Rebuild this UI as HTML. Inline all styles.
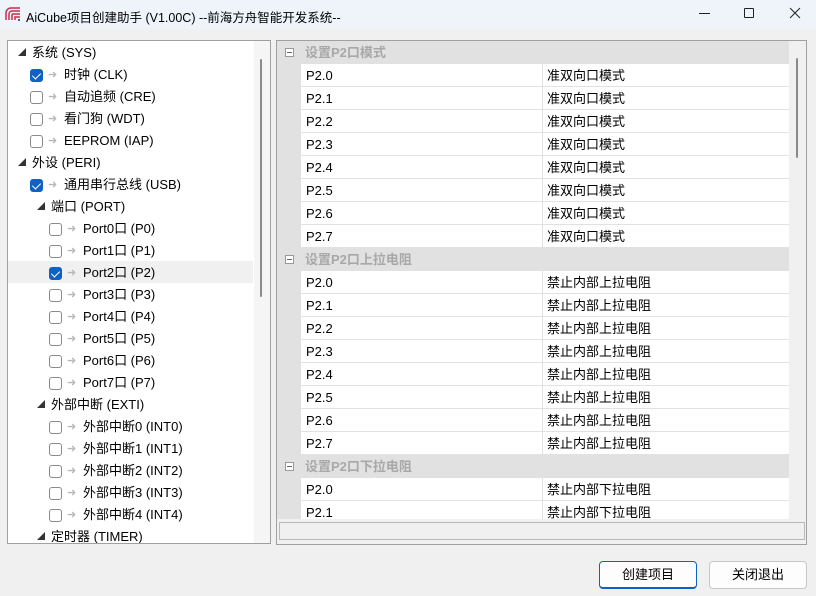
<!DOCTYPE html>
<html><head><meta charset="utf-8"><style>
*{margin:0;padding:0;box-sizing:border-box}
body{width:816px;height:596px;background:#f0f0f0;font-family:"Liberation Sans","Noto Sans CJK SC",sans-serif;font-size:13px;color:#000;position:relative;overflow:hidden}
.a{position:absolute}
.title{left:0;top:0;width:816px;height:29px;background:#eef4f9}
.tree{left:7px;top:40px;width:264px;height:504px;background:#fff;border:1px solid #a0a0a0;overflow:hidden}
.row{position:absolute;left:0;width:245px;height:22px;line-height:24px;white-space:nowrap}
.cb{position:absolute;top:6px;width:13px;height:13px;border:1px solid #8a8a8a;border-radius:3px;background:#fff}
.cb.on{background:#0f62c2;border-color:#0f62c2}
.cb.on:after{content:"";position:absolute;left:3px;top:1px;width:4px;height:7px;border:solid #fff;border-width:0 1.5px 1.5px 0;transform:rotate(45deg)}
.ar{position:absolute;top:0;color:#b8b8b8;font-size:11px}
.tri{position:absolute;top:0;font-size:8px;color:#333}
.grid{left:276px;top:40px;width:531px;height:505px;background:#f0f0f0;border:1px solid #a0a0a0;overflow:hidden}
.g{position:absolute;left:0;width:512px;height:23px;line-height:24px}
.cat{background:#e1e1e1;color:#a8a8a8;font-weight:bold}
.p{background:#e1e1e1}
.p .n{position:absolute;left:24px;width:241px;height:23px;background:#fff;border-bottom:1px solid #e1e1e1;padding-left:5px}
.p .v{position:absolute;left:265px;width:247px;height:23px;background:#fff;border-bottom:1px solid #e1e1e1;border-left:1px solid #e1e1e1;padding-left:4px}
.btn{height:28px;width:98px;border:1px solid #c8c8c8;border-radius:4px;background:#fdfdfd;text-align:center;line-height:26px;font-size:13px}
</style></head><body>
<div class="a title">
<svg class="a" style="left:5px;top:7px" width="16" height="14" viewBox="0 0 16 14"><path d="M1 13V6a5 5 0 0 1 5-5h9M4 13V7a3 3 0 0 1 3-3h8M7 13V8a1 1 0 0 1 1-1h7M10 13v-3h5" fill="none" stroke="#c0304a" stroke-width="1.5"/><path d="M13 13h2" stroke="#6048c0" stroke-width="2"/></svg>
<div class="a" style="left:26px;top:7px;font-size:12.5px">AiCube项目创建助手 (V1.00C) --前海方舟智能开发系统--</div>
<div class="a" style="left:699px;top:13px;width:11px;height:1px;background:#222"></div>
<div class="a" style="left:744px;top:8px;width:10px;height:10px;border:1px solid #222;border-radius:1px"></div>
<svg class="a" style="left:789px;top:7px" width="12" height="12"><path d="M1 1L11 11M11 1L1 11" stroke="#222" stroke-width="1"/></svg>
</div>

<div class="a tree">
<div class="a" style="left:246px;top:0;width:17px;height:502px;background:#f5f5f5"></div>
<div class="a" style="left:252px;top:18px;width:2px;height:238px;background:#8a8a8a;border-radius:1px"></div>
<div class="row" style="top:0"><span class="tri" style="left:10px">◢</span><span class="a" style="left:24px">系统 (SYS)</span></div>
<div class="row" style="top:22px"><span class="cb on" style="left:22px"></span><span class="ar" style="left:40px">➜</span><span class="a" style="left:56px">时钟 (CLK)</span></div>
<div class="row" style="top:44px"><span class="cb" style="left:22px"></span><span class="ar" style="left:40px">➜</span><span class="a" style="left:56px">自动追频 (CRE)</span></div>
<div class="row" style="top:66px"><span class="cb" style="left:22px"></span><span class="ar" style="left:40px">➜</span><span class="a" style="left:56px">看门狗 (WDT)</span></div>
<div class="row" style="top:88px"><span class="cb" style="left:22px"></span><span class="ar" style="left:40px">➜</span><span class="a" style="left:56px">EEPROM (IAP)</span></div>
<div class="row" style="top:110px"><span class="tri" style="left:10px">◢</span><span class="a" style="left:24px">外设 (PERI)</span></div>
<div class="row" style="top:132px"><span class="cb on" style="left:22px"></span><span class="ar" style="left:40px">➜</span><span class="a" style="left:56px">通用串行总线 (USB)</span></div>
<div class="row" style="top:154px"><span class="tri" style="left:29px">◢</span><span class="a" style="left:43px">端口 (PORT)</span></div>
<div class="row" style="top:176px"><span class="cb" style="left:41px"></span><span class="ar" style="left:59px">➜</span><span class="a" style="left:75px">Port0口 (P0)</span></div>
<div class="row" style="top:198px"><span class="cb" style="left:41px"></span><span class="ar" style="left:59px">➜</span><span class="a" style="left:75px">Port1口 (P1)</span></div>
<div class="row" style="top:220px;background:#f0f0f0"><span class="cb on" style="left:41px"></span><span class="ar" style="left:59px">➜</span><span class="a" style="left:75px">Port2口 (P2)</span></div>
<div class="row" style="top:242px"><span class="cb" style="left:41px"></span><span class="ar" style="left:59px">➜</span><span class="a" style="left:75px">Port3口 (P3)</span></div>
<div class="row" style="top:264px"><span class="cb" style="left:41px"></span><span class="ar" style="left:59px">➜</span><span class="a" style="left:75px">Port4口 (P4)</span></div>
<div class="row" style="top:286px"><span class="cb" style="left:41px"></span><span class="ar" style="left:59px">➜</span><span class="a" style="left:75px">Port5口 (P5)</span></div>
<div class="row" style="top:308px"><span class="cb" style="left:41px"></span><span class="ar" style="left:59px">➜</span><span class="a" style="left:75px">Port6口 (P6)</span></div>
<div class="row" style="top:330px"><span class="cb" style="left:41px"></span><span class="ar" style="left:59px">➜</span><span class="a" style="left:75px">Port7口 (P7)</span></div>
<div class="row" style="top:352px"><span class="tri" style="left:29px">◢</span><span class="a" style="left:43px">外部中断 (EXTI)</span></div>
<div class="row" style="top:374px"><span class="cb" style="left:41px"></span><span class="ar" style="left:59px">➜</span><span class="a" style="left:75px">外部中断0 (INT0)</span></div>
<div class="row" style="top:396px"><span class="cb" style="left:41px"></span><span class="ar" style="left:59px">➜</span><span class="a" style="left:75px">外部中断1 (INT1)</span></div>
<div class="row" style="top:418px"><span class="cb" style="left:41px"></span><span class="ar" style="left:59px">➜</span><span class="a" style="left:75px">外部中断2 (INT2)</span></div>
<div class="row" style="top:440px"><span class="cb" style="left:41px"></span><span class="ar" style="left:59px">➜</span><span class="a" style="left:75px">外部中断3 (INT3)</span></div>
<div class="row" style="top:462px"><span class="cb" style="left:41px"></span><span class="ar" style="left:59px">➜</span><span class="a" style="left:75px">外部中断4 (INT4)</span></div>
<div class="row" style="top:484px"><span class="tri" style="left:29px">◢</span><span class="a" style="left:43px">定时器 (TIMER)</span></div>
</div>

<div class="a grid">
<div class="a" style="left:512px;top:0;width:17px;height:478px;background:#f0f0f0"></div>
<div class="a" style="left:519px;top:17px;width:2px;height:100px;background:#8a8a8a;border-radius:1px"></div>
<div class="a" style="left:2px;top:481px;width:526px;height:18px;border:1px solid #b8b8b8;background:#f0f0f0"></div>
<div class="a" style="left:0;top:0;width:512px;height:478px;overflow:hidden">
<div class="g cat" style="top:0"><span class="a" style="left:8px;top:7px;width:9px;height:9px;border:1px solid #999;background:#fff"></span><span class="a" style="left:10px;top:11px;width:5px;height:1px;background:#666"></span><span class="a" style="left:28px">设置P2口模式</span></div>
<div class="g p" style="top:23px"><div class="n">P2.0</div><div class="v">准双向口模式</div></div>
<div class="g p" style="top:46px"><div class="n">P2.1</div><div class="v">准双向口模式</div></div>
<div class="g p" style="top:69px"><div class="n">P2.2</div><div class="v">准双向口模式</div></div>
<div class="g p" style="top:92px"><div class="n">P2.3</div><div class="v">准双向口模式</div></div>
<div class="g p" style="top:115px"><div class="n">P2.4</div><div class="v">准双向口模式</div></div>
<div class="g p" style="top:138px"><div class="n">P2.5</div><div class="v">准双向口模式</div></div>
<div class="g p" style="top:161px"><div class="n">P2.6</div><div class="v">准双向口模式</div></div>
<div class="g p" style="top:184px"><div class="n">P2.7</div><div class="v">准双向口模式</div></div>
<div class="g cat" style="top:207px"><span class="a" style="left:8px;top:7px;width:9px;height:9px;border:1px solid #999;background:#fff"></span><span class="a" style="left:10px;top:11px;width:5px;height:1px;background:#666"></span><span class="a" style="left:28px">设置P2口上拉电阻</span></div>
<div class="g p" style="top:230px"><div class="n">P2.0</div><div class="v">禁止内部上拉电阻</div></div>
<div class="g p" style="top:253px"><div class="n">P2.1</div><div class="v">禁止内部上拉电阻</div></div>
<div class="g p" style="top:276px"><div class="n">P2.2</div><div class="v">禁止内部上拉电阻</div></div>
<div class="g p" style="top:299px"><div class="n">P2.3</div><div class="v">禁止内部上拉电阻</div></div>
<div class="g p" style="top:322px"><div class="n">P2.4</div><div class="v">禁止内部上拉电阻</div></div>
<div class="g p" style="top:345px"><div class="n">P2.5</div><div class="v">禁止内部上拉电阻</div></div>
<div class="g p" style="top:368px"><div class="n">P2.6</div><div class="v">禁止内部上拉电阻</div></div>
<div class="g p" style="top:391px"><div class="n">P2.7</div><div class="v">禁止内部上拉电阻</div></div>
<div class="g cat" style="top:414px"><span class="a" style="left:8px;top:7px;width:9px;height:9px;border:1px solid #999;background:#fff"></span><span class="a" style="left:10px;top:11px;width:5px;height:1px;background:#666"></span><span class="a" style="left:28px">设置P2口下拉电阻</span></div>
<div class="g p" style="top:437px"><div class="n">P2.0</div><div class="v">禁止内部下拉电阻</div></div>
<div class="g p" style="top:460px"><div class="n">P2.1</div><div class="v">禁止内部下拉电阻</div></div>
</div>
</div>

<div class="a btn" style="left:599px;top:561px;border:1px solid #0f62c2;border-width:1px 1px 2px 1px">创建项目</div>
<div class="a btn" style="left:709px;top:561px">关闭退出</div>
</body></html>
